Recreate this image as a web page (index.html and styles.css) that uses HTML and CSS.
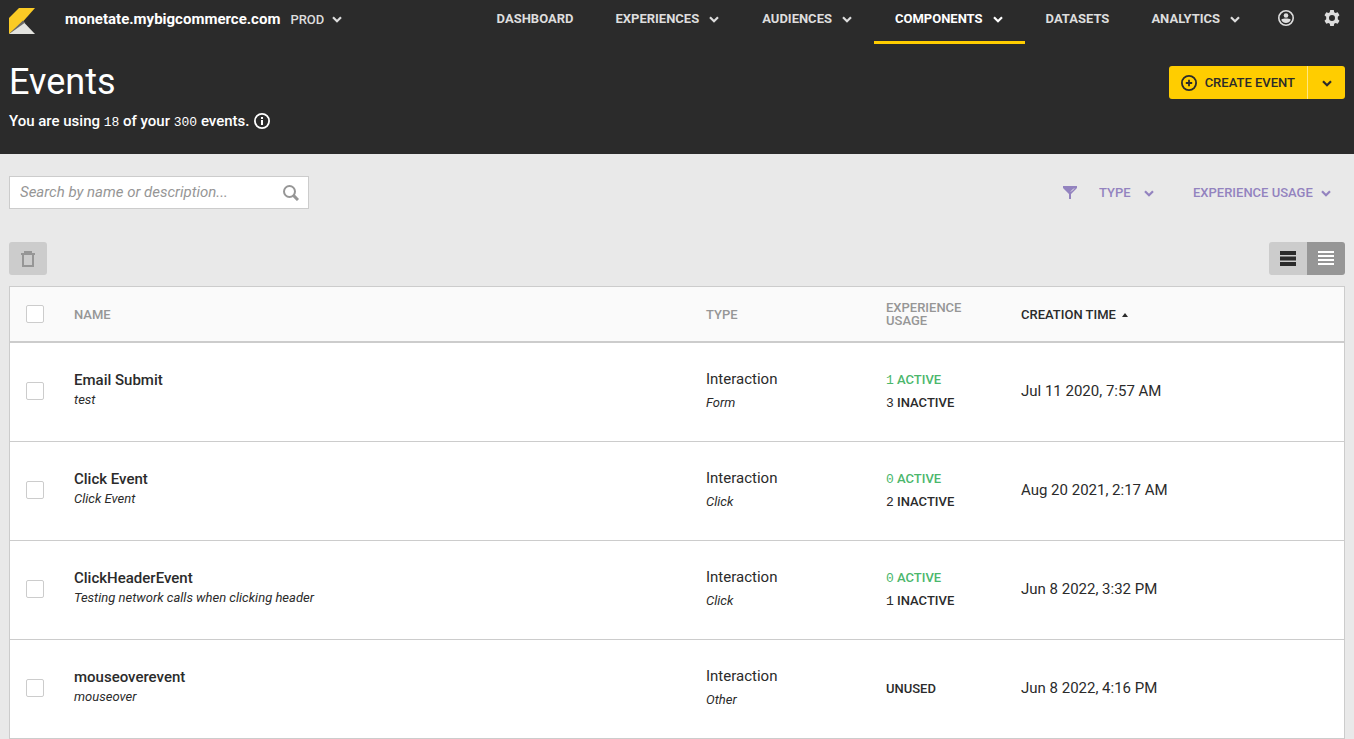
FILE: index.html
```html
<!DOCTYPE html>
<html lang="en">
<head>
    <meta charset="UTF-8">
    <meta name="viewport" content="width=device-width, initial-scale=1.0">
    <title>Events</title>
    <link rel="stylesheet" href="styles.css">
</head>
<body>
    <!-- Shared icon shapes -->
    <svg class="sprite" aria-hidden="true">
        <symbol id="chevron" viewBox="0 0 12 12">
            <path d="M2 4.200 6 8.200 10 4.200" fill="none" stroke="currentColor" stroke-width="2.200"/>
        </symbol>
    </svg>

    <header class="header">
        <div class="topbar">
            <a class="logo" href="/" aria-label="Home">
                <svg width="26" height="26" viewBox="0 0 26 26">
                    <path d="M10 0H26L14.500 13 0 26V10z" fill="#fbcb25"/>
                    <path d="M0 26 14 12.500 16.500 15z" fill="#6b6a68"/>
                    <path d="M0 26 15.500 15 26 26z" fill="#e3e3df"/>
                </svg>
            </a>
            <div class="account">
                <label class="account-name" for="environment">monetate.mybigcommerce.com</label>
                <div class="picker">
                    <select id="environment"><option>PROD</option></select>
                    <svg class="chevron"><use href="#chevron"/></svg>
                </div>
            </div>
            <nav class="nav">
                <a class="nav-item" href="/dashboard">DASHBOARD</a>
                <button class="nav-item" type="button">EXPERIENCES <svg class="chevron"><use href="#chevron"/></svg></button>
                <button class="nav-item" type="button">AUDIENCES <svg class="chevron"><use href="#chevron"/></svg></button>
                <button class="nav-item active" type="button">COMPONENTS <svg class="chevron"><use href="#chevron"/></svg></button>
                <a class="nav-item" href="/datasets">DATASETS</a>
                <button class="nav-item" type="button">ANALYTICS <svg class="chevron"><use href="#chevron"/></svg></button>
            </nav>
            <div class="user-menu">
                <button class="icon-button" type="button" aria-label="Account">
                    <svg width="16" height="16" viewBox="0 0 16 16">
                        <circle cx="8" cy="8" r="7.200" fill="none" stroke="currentColor" stroke-width="1.600"/>
                        <circle cx="8" cy="5.500" r="2.300" fill="currentColor"/>
                        <path d="M3.200 9.800C4.200 8.700 6.300 8.600 8 8.600s3.800.1 4.800 1.200C11.800 11.900 10 13 8 13s-3.800-1.100-4.800-3.200z" fill="currentColor"/>
                    </svg>
                </button>
                <button class="icon-button" type="button" aria-label="Settings">
                    <svg width="16" height="16" viewBox="0 0 16 16">
                        <path fill="currentColor" fill-rule="evenodd" d="M6.200 0h3.600l.4 2.200 1.300.8 2.200-.8 1.800 3.100L13.800 6.800v2.400l1.700 1.500-1.800 3.100-2.200-.8-1.300.8-.4 2.200H6.200l-.4-2.200-1.300-.8-2.200.8L.5 10.700l1.700-1.500V6.800L.5 5.300l1.800-3.100 2.200.8 1.300-.8zM8 5a3 3 0 1 0 0 6 3 3 0 0 0 0-6z"/>
                    </svg>
                </button>
            </div>
        </div>

        <div class="page-head">
            <h1 class="page-title">Events</h1>
            <div class="split-button">
                <button class="button" type="button">
                    <svg width="16" height="16" viewBox="0 0 16 16" fill="none" stroke="currentColor" stroke-width="1.800">
                        <circle cx="8" cy="8" r="7.100"/>
                        <path d="M8 4.800v6.400M4.800 8h6.400"/>
                    </svg>
                    CREATE EVENT
                </button>
                <button class="button button-more" type="button" aria-label="More create options">
                    <svg class="chevron"><use href="#chevron"/></svg>
                </button>
            </div>
        </div>
        <p class="quota">
            <span>You are using <span class="number">18</span> of your <span class="number">300</span> events.</span>
            <svg width="16" height="16" viewBox="0 0 16 16">
                <circle cx="8" cy="8" r="7.100" fill="none" stroke="currentColor" stroke-width="1.800"/>
                <path d="M7 4h2v2H7zM7 7h2v5H7z" fill="currentColor"/>
            </svg>
        </p>
    </header>

    <main>
        <div class="filter-bar">
            <form class="search">
                <input type="search" placeholder="Search by name or description..." aria-label="Search by name or description">
                <button type="submit" aria-label="Search">
                    <svg width="16" height="16" viewBox="0 0 16 16" fill="none" stroke="currentColor" stroke-width="2">
                        <circle cx="6.500" cy="6.500" r="5.500"/>
                        <path d="M10.400 10.400 15 15" stroke-width="3"/>
                    </svg>
                </button>
            </form>
            <div class="filters">
                <svg width="14" height="13" viewBox="0 0 14 13">
                    <path d="M0 0h14v2L8 8v5H6V8L0 2z" fill="currentColor"/>
                    <path d="M8 5.500 11 2.500" stroke="#e9e9e9"/>
                </svg>
                <div class="picker picker-type">
                    <select aria-label="Type"><option>TYPE</option></select>
                    <svg class="chevron"><use href="#chevron"/></svg>
                </div>
                <div class="picker">
                    <select aria-label="Experience usage"><option>EXPERIENCE USAGE</option></select>
                    <svg class="chevron"><use href="#chevron"/></svg>
                </div>
            </div>
        </div>

        <div class="toolbar">
            <button class="tool tool-delete" type="button" aria-label="Delete" disabled>
                <svg width="14" height="16" viewBox="0 0 14 16">
                    <path d="M3 0h8v2h3v2h-1v12H1V4H0V2h3zM3 4v10h8V4z" fill="currentColor" fill-rule="evenodd"/>
                </svg>
            </button>
            <div class="view-toggle">
                <button class="tool" type="button" aria-label="Comfortable rows" aria-pressed="false">
                    <svg width="16" height="15" viewBox="0 0 16 15"><path d="M0 0h16v4H0zM0 5.500h16v4H0zM0 11h16v4H0z" fill="currentColor"/></svg>
                </button>
                <button class="tool" type="button" aria-label="Compact rows" aria-pressed="true">
                    <svg width="16" height="15" viewBox="0 0 16 15"><path d="M0 0h16v2H0zM0 4h16v2H0zM0 8h16v2H0zM0 12h16v2H0z" fill="currentColor"/></svg>
                </button>
            </div>
        </div>

        <table class="events">
            <colgroup>
                <col class="col-check">
                <col>
                <col class="col-type">
                <col class="col-usage">
                <col class="col-time">
            </colgroup>
            <thead>
                <tr>
                    <th><input type="checkbox" aria-label="Select all events"></th>
                    <th>NAME</th>
                    <th>TYPE</th>
                    <th>EXPERIENCE USAGE</th>
                    <th class="sorted" aria-sort="ascending">CREATION TIME <svg width="6" height="4" viewBox="0 0 6 4"><path d="M3 0 6 4H0z" fill="currentColor"/></svg></th>
                </tr>
            </thead>
            <tbody>
                <tr>
                    <td><input type="checkbox" aria-label="Select Email Submit"></td>
                    <td class="event"><a href="/events/1">Email Submit</a><p>test</p></td>
                    <td class="type">Interaction<p>Form</p></td>
                    <td class="usage"><p class="live"><span class="number">1</span> ACTIVE</p><p><span class="number">3</span> INACTIVE</p></td>
                    <td>Jul 11 2020, 7:57 AM</td>
                </tr>
                <tr>
                    <td><input type="checkbox" aria-label="Select Click Event"></td>
                    <td class="event"><a href="/events/2">Click Event</a><p>Click Event</p></td>
                    <td class="type">Interaction<p>Click</p></td>
                    <td class="usage"><p class="live"><span class="number">0</span> ACTIVE</p><p><span class="number">2</span> INACTIVE</p></td>
                    <td>Aug 20 2021, 2:17 AM</td>
                </tr>
                <tr>
                    <td><input type="checkbox" aria-label="Select ClickHeaderEvent"></td>
                    <td class="event"><a href="/events/3">ClickHeaderEvent</a><p>Testing network calls when clicking header</p></td>
                    <td class="type">Interaction<p>Click</p></td>
                    <td class="usage"><p class="live"><span class="number">0</span> ACTIVE</p><p><span class="number">1</span> INACTIVE</p></td>
                    <td>Jun 8 2022, 3:32 PM</td>
                </tr>
                <tr>
                    <td><input type="checkbox" aria-label="Select mouseoverevent"></td>
                    <td class="event"><a href="/events/4">mouseoverevent</a><p>mouseover</p></td>
                    <td class="type">Interaction<p>Other</p></td>
                    <td class="usage"><p>UNUSED</p></td>
                    <td>Jun 8 2022, 4:16 PM</td>
                </tr>
            </tbody>
        </table>
    </main>
</body>
</html>
```
FILE: styles.css
```css
:root {
    --dark: #2b2b2b;
    --page: #e9e9e9;
    --line: #cccccc;
    --muted: #969696;
    --yellow: #ffcd00;
    --purple: #9383bf;
    --green: #4bb76c;
}

* {
    box-sizing: border-box;
}

body {
    margin: 0;
    font-family: Roboto, sans-serif;
    font-size: 15px;
    line-height: 23px;
    background: var(--page);
    color: var(--dark);
}

p {
    margin: 0;
}

a {
    color: inherit;
    text-decoration: none;
}

svg {
    display: block;
    flex: none;
}

button,
input,
select {
    font: inherit;
    color: inherit;
    margin: 0;
    padding: 0;
    border: 0;
    border-radius: 0;
    background: none;
}

button {
    cursor: pointer;
}

.sprite {
    position: absolute;
    width: 0;
    height: 0;
}

.chevron {
    width: 12px;
    height: 12px;
    pointer-events: none;
}

.number {
    font-family: Consolas, "Liberation Mono", monospace;
    font-size: 13px;
    font-weight: 400;
    line-height: 1;
}

/* Header */
.header {
    background: var(--dark);
    color: #ffffff;
    padding: 0 9px 22px;
}

.topbar {
    display: flex;
    height: 44px;
}

.logo {
    padding-top: 8px;
    margin-right: 30px;
}

.account {
    display: flex;
    align-items: center;
    gap: 10px;
    padding-bottom: 6px;
}

.account-name {
    font-weight: 700;
}

/* The arrow shares the select's grid cell */
.picker {
    display: grid;
    align-items: center;
    font-size: 13px;
    font-weight: 500;
}

.picker select {
    grid-area: 1 / 1;
    appearance: none;
    padding-right: 19px;
    cursor: pointer;
}

.picker .chevron {
    grid-area: 1 / 1;
    justify-self: end;
}

.account .picker {
    color: #dddddd;
}

.nav {
    display: flex;
    margin-left: auto;
}

.nav-item {
    display: flex;
    align-items: center;
    gap: 9px;
    padding: 0 21px 4px;
    border-bottom: 3px solid transparent;
    font-size: 13px;
    font-weight: 700;
    color: #dddddd;
}

.nav-item.active {
    color: #ffffff;
    border-bottom-color: var(--yellow);
}

.user-menu {
    display: flex;
    gap: 30px;
    padding: 0 5px 8px 16px;
    color: #dddddd;
}

.page-head {
    display: flex;
    justify-content: space-between;
    align-items: center;
    margin-top: 22px;
}

.page-title {
    margin: 0;
    font-size: 36px;
    line-height: 33px;
    font-weight: 400;
}

.split-button {
    display: flex;
}

.button {
    display: flex;
    align-items: center;
    justify-content: center;
    gap: 8px;
    height: 33px;
    padding: 0 12px;
    border-radius: 3px 0 0 3px;
    background: var(--yellow);
    color: var(--dark);
    font-size: 13px;
    font-weight: 500;
}

.button-more {
    width: 38px;
    border-left: 1px solid #ffe680;
    border-radius: 0 3px 3px 0;
}

.quota {
    display: flex;
    align-items: center;
    gap: 5px;
    margin-top: 11px;
    line-height: 22px;
    font-weight: 500;
}

/* Search and filters */
main {
    padding: 22px 9px 0;
}

.filter-bar,
.toolbar {
    display: flex;
    justify-content: space-between;
    align-items: center;
}

.search {
    display: flex;
    width: 300px;
    height: 33px;
    padding: 0 9px 0 10px;
    background: #ffffff;
    border: 1px solid var(--line);
}

.search input {
    flex: 1;
    min-width: 0;
    outline: none;
}

.search input::placeholder {
    color: var(--muted);
    font-style: italic;
}

.search button {
    color: var(--muted);
}

.filters {
    display: flex;
    align-items: center;
    gap: 22px;
    padding-right: 13px;
    color: var(--purple);
}

.picker-type {
    margin-right: 16px;
}

.picker-type select {
    padding-right: 24px;
}

.toolbar {
    margin: 33px 0 11px;
}

.tool {
    display: flex;
    align-items: center;
    justify-content: center;
    width: 38px;
    height: 33px;
    background: var(--line);
}

.tool-delete {
    border-radius: 3px;
    color: var(--muted);
}

.view-toggle {
    display: flex;
    border-radius: 3px;
    overflow: hidden;
}

.tool[aria-pressed="true"] {
    background: var(--muted);
    color: #ffffff;
}

/* Events table */
.events {
    width: 100%;
    table-layout: fixed;
    border: 1px solid var(--line);
    border-bottom: 0;
    border-spacing: 0;
    background: #ffffff;
}

.col-check {
    width: 48px;
}

.col-type {
    width: 180px;
}

.col-usage {
    width: 135px;
}

.col-time {
    width: 339px;
}

.events th {
    height: 56px;
    padding: 0 16px;
    background: #fafafa;
    border-bottom: 2px solid var(--line);
    color: var(--muted);
    font-size: 13px;
    line-height: 13px;
    font-weight: 500;
    text-align: left;
}

.events .sorted {
    color: var(--dark);
}

.sorted svg {
    display: inline-block;
    vertical-align: middle;
    margin-left: 3px;
}

.events td {
    padding: 25px 16px 27px;
    border-bottom: 1px solid var(--line);
}

.events input {
    display: block;
    appearance: none;
    width: 18px;
    height: 18px;
    background: #ffffff;
    border: 1px solid var(--line);
    border-radius: 2px;
}

.events input:checked {
    background: var(--purple);
}

.events .event {
    padding-top: 26px;
    vertical-align: top;
}

.event a {
    font-weight: 500;
}

.event p,
.type p {
    font-size: 13px;
    font-style: italic;
}

.event p {
    line-height: 16px;
}

.usage {
    font-size: 13px;
    font-weight: 500;
}

.live {
    color: var(--green);
}
```
